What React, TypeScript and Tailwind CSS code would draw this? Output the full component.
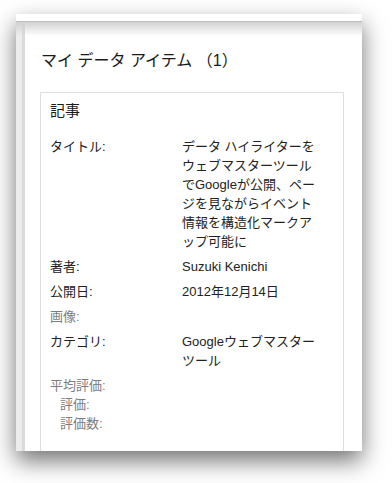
import React from 'react';

type Row = { label: string; value?: string; muted?: boolean; indent?: boolean };

const rows: Row[] = [
  { label: 'タイトル:', value: 'データ ハイライターをウェブマスターツールでGoogleが公開、ページを見ながらイベント情報を構造化マークアップ可能に' },
  { label: '著者:', value: 'Suzuki Kenichi' },
  { label: '公開日:', value: '2012年12月14日' },
  { label: '画像:', muted: true },
  { label: 'カテゴリ:', value: 'Googleウェブマスターツール' },
];

const rating: Row[] = [
  { label: '平均評価:', muted: true },
  { label: '評価:', muted: true, indent: true },
  { label: '評価数:', muted: true, indent: true },
];

const DataRow = ({ label, value, muted, indent }: Row) => (
  <div className="flex leading-[19px]">
    <div className={`w-[132px] shrink-0 ${muted ? 'text-[#7d7d7d]' : 'text-[#222]'} ${indent ? 'pl-[10px]' : ''}`}>
      {label}
    </div>
    {value && <div className="w-[140px] text-[#222] [line-break:loose]">{value}</div>}
  </div>
);

export default function App() {
  return (
    <div
      className="min-h-[483px] bg-white pt-[14px] pl-4"
      style={{ fontFamily: '"Liberation Sans", "Noto Sans CJK JP", sans-serif' }}
    >
      <div className="w-[346px] h-[437px] bg-white flex flex-col overflow-hidden shadow-[0_10px_22px_rgba(0,0,0,0.55)]">
        {/* window top bar */}
        <div className="h-[8px] shrink-0 bg-white border-b border-[#bdbdbd]" />

        <div className="relative flex flex-1 min-h-0">
          <div className="absolute inset-x-0 top-0 h-[14px] bg-gradient-to-b from-[#d2d2d2] to-transparent pointer-events-none" />
          <div className="w-[6px] shrink-0 bg-[#ececec]" />
          <div className="w-[3px] shrink-0 bg-[#dadada]" />

          <div className="flex-1 flex flex-col">
            <h1 className="pt-[29px] pl-[16px] text-[16px] leading-[20px] text-[#1a1a1a] font-normal">
              マイ データ アイテム （1）
            </h1>

            <div className="mt-[21px] ml-[15px] w-[304px] flex-1 border-x border-t border-[#dedede] pt-2 pl-[9px] text-[13px]">
              <div className="text-[15px] leading-[20px] text-[#1a1a1a]">記事</div>

              <div className="mt-[16px] flex flex-col gap-[6px]">
                {rows.map((r) => (
                  <DataRow key={r.label} {...r} />
                ))}
                <div className="flex flex-col">
                  {rating.map((r) => (
                    <DataRow key={r.label} {...r} />
                  ))}
                </div>
              </div>
            </div>
          </div>
        </div>
      </div>
    </div>
  );
}
